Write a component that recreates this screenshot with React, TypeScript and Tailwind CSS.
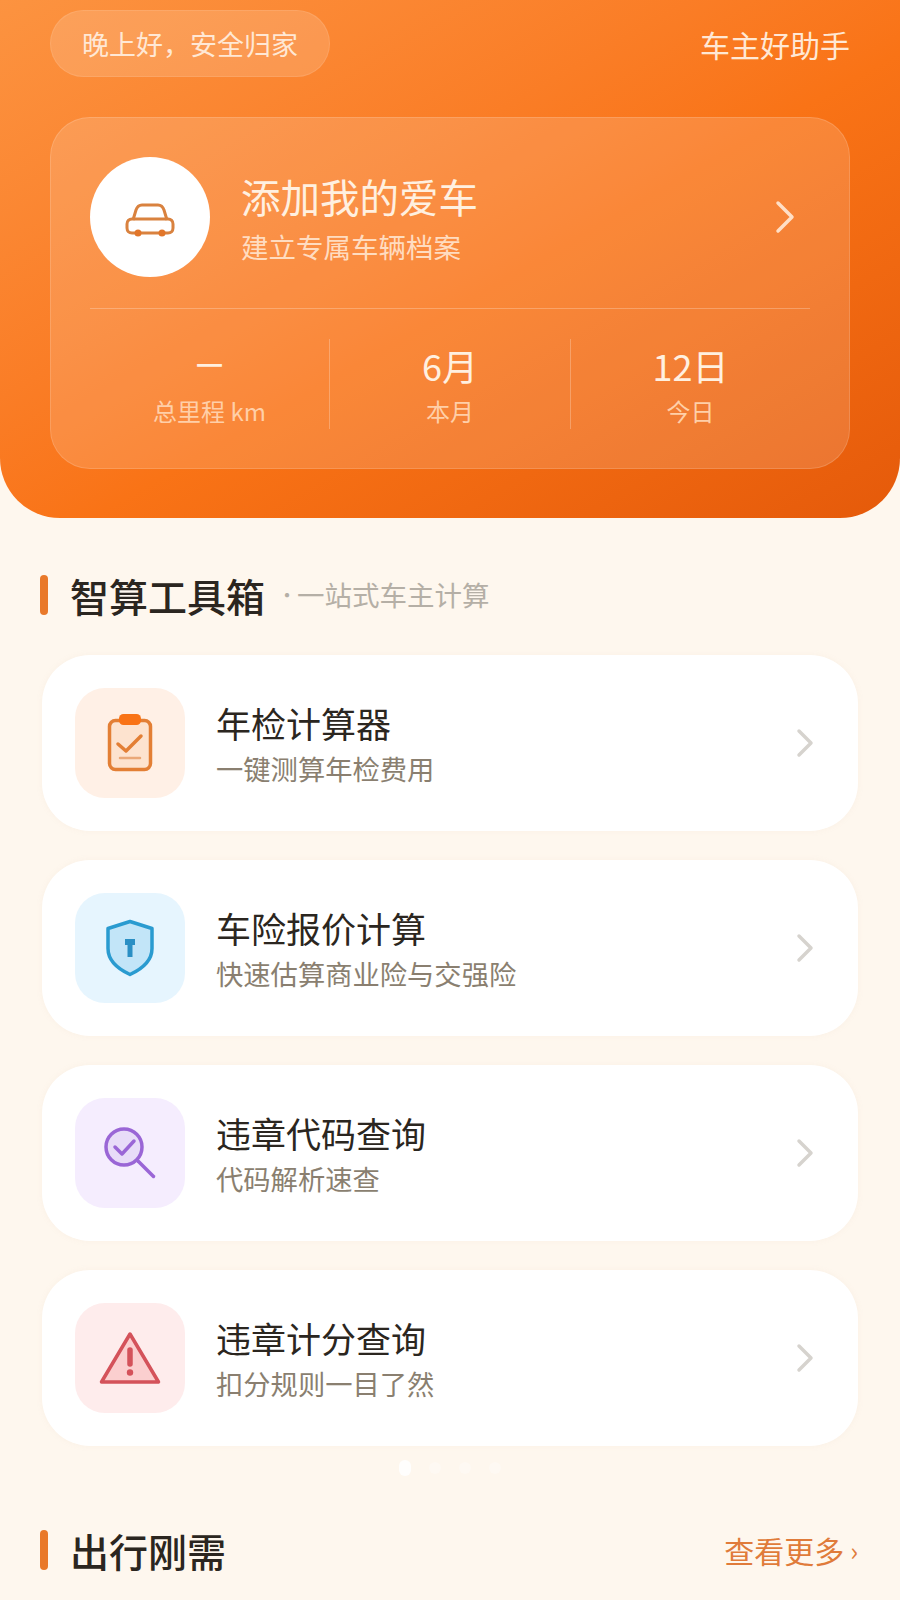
import React from "react";

const font = { fontFamily: '"Noto Sans CJK SC", "Noto Sans", sans-serif' };

function Chevron() {
  return (
    <svg width="18" height="30" viewBox="0 0 18 30" fill="none" stroke="#d6d3ce" strokeWidth="3.5" strokeLinecap="round" strokeLinejoin="round">
      <path d="M3 3l12 12L3 27" />
    </svg>
  );
}

function ClipIcon() {
  return (
    <svg width="46" height="58" viewBox="0 0 46 58" fill="none">
      <rect x="2.5" y="6.5" width="41" height="49" rx="6" fill="#fde3cf" stroke="#e37f35" strokeWidth="3.5" />
      <rect x="12" y="0" width="22" height="11" rx="4.5" fill="#f97316" />
      <path d="M11 30l8 7 15-15" stroke="#e37f35" strokeWidth="3.5" strokeLinecap="round" strokeLinejoin="round" />
      <path d="M13 44h20" stroke="#eaa878" strokeWidth="2.5" strokeLinecap="round" />
    </svg>
  );
}

function ShieldIcon() {
  return (
    <svg width="50" height="58" viewBox="0 0 50 58" fill="none">
      <path d="M25 2.5l22 7v20c0 12-9 20-22 26C12 49.5 3 41.5 3 29.5v-20z" fill="#c2e5f8" stroke="#2a9bd0" strokeWidth="3.5" strokeLinejoin="round" />
      <path d="M20 20h10v6h-2.5v12h-5V26H20z" fill="#2a8fc4" />
    </svg>
  );
}

function SearchIcon() {
  return (
    <svg width="52" height="52" viewBox="0 0 52 52" fill="none">
      <circle cx="20" cy="20" r="18" fill="#e8dcf8" stroke="#9a66d6" strokeWidth="3.5" />
      <path d="M11 20l7 7 12-13" stroke="#9a66d6" strokeWidth="3.5" strokeLinecap="round" strokeLinejoin="round" />
      <path d="M34 34l15.5 15.5" stroke="#9a66d6" strokeWidth="3.5" strokeLinecap="round" />
    </svg>
  );
}

function WarnIcon() {
  return (
    <svg width="62" height="54" viewBox="0 0 62 54" fill="none">
      <path d="M31 3l28.5 48H2.5z" fill="#fbcfcf" stroke="#d4525a" strokeWidth="3.5" strokeLinejoin="round" />
      <path d="M31 19v14" stroke="#d4525a" strokeWidth="5.5" strokeLinecap="round" />
      <circle cx="31" cy="41.5" r="3.2" fill="#d4525a" />
    </svg>
  );
}

function CarIcon() {
  return (
    <svg className="mt-[6px]" width="50" height="34" viewBox="0 0 50 34" fill="none" stroke="#d9823f" strokeWidth="3" strokeLinejoin="round">
      <path d="M8 17l3-10c1-3 3-5 6-5h16c3 0 5 2 6 5l3 10" />
      <path d="M7 16h36c3 0 5 2 5 5v4c0 3-2 5-5 5H7c-3 0-5-2-5-5v-4c0-3 2-5 5-5z" />
      <circle cx="13" cy="30" r="3.5" fill="#e2762a" stroke="none" />
      <circle cx="37" cy="30" r="3.5" fill="#e2762a" stroke="none" />
    </svg>
  );
}

const tools = [
  { t: "年检计算器", s: "一键测算年检费用", bg: "bg-[#fff0e6]", icon: <ClipIcon /> },
  { t: "车险报价计算", s: "快速估算商业险与交强险", bg: "bg-[#e6f5fe]", icon: <ShieldIcon /> },
  { t: "违章代码查询", s: "代码解析速查", bg: "bg-[#f5edfe]", icon: <SearchIcon /> },
  { t: "违章计分查询", s: "扣分规则一目了然", bg: "bg-[#feecec]", icon: <WarnIcon /> },
];

const stats = [
  { v: "一", l: "总里程 km" },
  { v: "6月", l: "本月" },
  { v: "12日", l: "今日" },
];

export default function App() {
  return (
    <div style={font} className="w-[900px] h-[1600px] overflow-hidden bg-[#fef7ee]">
      <header className="h-[518px] rounded-b-[60px] bg-gradient-to-br from-[#fc9340] via-[#f97316] via-55% to-[#e55a0a] px-[50px] pt-[10px]">
        <div className="flex items-center justify-between h-[67px]">
          <div className="h-[67px] w-[280px] flex items-center justify-center rounded-full bg-white/15 border border-white/10 text-[27px] leading-none text-[#ffe8d5]">
            晚上好，安全归家
          </div>
          <div className="text-[30px] leading-none text-[#ffe8d5]">车主好助手</div>
        </div>
        <div className="mt-[40px] h-[352px] rounded-[40px] border border-white/15 bg-white/15 px-[39px] pt-[39px]">
          <div className="flex items-center h-[120px]">
            <div className="w-[120px] h-[120px] rounded-full bg-white flex items-center justify-center">
              <CarIcon />
            </div>
            <div className="ml-[31px] flex-1">
              <div className="mt-[2px] text-[39.5px] leading-[46px] text-[#fff0e0]">添加我的爱车</div>
              <div className="mt-[9px] text-[27.5px] leading-[36px] text-[#ffdcc0]">建立专属车辆档案</div>
            </div>
            <svg className="mr-[15px]" width="20" height="34" viewBox="0 0 20 34" fill="none" stroke="#ffdfc6" strokeWidth="3.5" strokeLinecap="round" strokeLinejoin="round">
              <path d="M3 3l14 14L3 31" />
            </svg>
          </div>
          <div className="mt-[31px] h-px bg-white/25" />
          <div className="mt-[30px] flex h-[90px]">
            {stats.map((x, i) => (
              <div key={x.l} className={`flex flex-col items-center ${i === 0 ? "w-[239px]" : i === 1 ? "w-[241px] border-l border-white/25" : "w-[240px] border-l border-white/25"}`}>
                <div className={i === 0 ? "text-[27px] font-medium leading-[52px] text-[#fff0e0]" : "text-[36px] leading-[52px] text-[#fff0e0]"}>{x.v}</div>
                <div className="mt-[4px] text-[24px] leading-[32px] text-[#ffcfa8]">{x.l}</div>
              </div>
            ))}
          </div>
        </div>
      </header>

      <section className="pl-[40px] pr-[42px]">
        <div className="mt-[57px] h-[40px] flex items-center">
          <div className="w-[8px] h-[40px] rounded-full bg-[#e9792a]" />
          <h2 className="ml-[22px] text-[39px] leading-none font-medium text-[#2b2620]">智算工具箱</h2>
          <span className="ml-[12px] text-[20px] leading-none text-[#b5afa6]">·</span>
          <span className="text-[27.5px] leading-none text-[#b5afa6]">一站式车主计算</span>
        </div>
        <div className="mt-[40px] ml-[2px] flex flex-col gap-[29px]">
          {tools.map((x) => (
            <div key={x.t} className="h-[176px] rounded-[48px] bg-white flex items-center pl-[33px] pr-[44px] shadow-[0_0_6px_rgba(200,170,140,0.08)]">
              <div className={`w-[110px] h-[110px] rounded-[30px] flex items-center justify-center ${x.bg}`}>{x.icon}</div>
              <div className="ml-[31px] flex-1">
                <div className="text-[35px] leading-[44px] text-[#2b2620]">{x.t}</div>
                <div className="mt-[5px] text-[27.3px] leading-[36px] text-[#8a7f70]">{x.s}</div>
              </div>
              <Chevron />
            </div>
          ))}
        </div>
        <div className="mt-[14px] ml-[359px] flex items-center gap-[18px]">
          <div className="w-[12px] h-[16px] rounded-full bg-white/90" />
          <div className="w-[12px] h-[12px] rounded-full bg-white/30" />
          <div className="w-[12px] h-[12px] rounded-full bg-white/30" />
          <div className="w-[12px] h-[12px] rounded-full bg-white/30" />
        </div>
        <div className="mt-[54px] h-[40px] flex items-center justify-between">
          <div className="flex items-center">
            <div className="w-[8px] h-[40px] rounded-full bg-[#e9792a]" />
            <h2 className="ml-[22px] text-[39px] leading-none font-medium text-[#2b2620]">出行刚需</h2>
          </div>
          <div className="flex items-center text-[30px] leading-none text-[#e07b3a]">
            查看更多
            <span className="ml-[6px] text-[26px] leading-none">›</span>
          </div>
        </div>
      </section>
    </div>
  );
}
